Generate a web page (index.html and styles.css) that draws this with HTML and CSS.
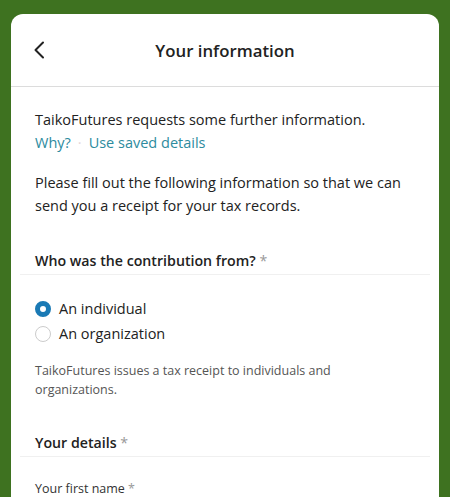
FILE: index.html
```html
<!DOCTYPE html>
<html lang="en">
<head>
  <meta charset="UTF-8" />
  <meta name="viewport" content="width=device-width, initial-scale=1" />
  <title>Your information</title>
  <link rel="stylesheet" href="styles.css">
</head>
<body>

  <div class="sheet">
    <header class="sheet-header">
      <button class="back-btn" aria-label="Back">
        <svg width="12" height="18" viewBox="0 0 12 18" aria-hidden="true">
          <path d="M10 1.5 L2.5 9 L10 16.5" fill="none" stroke="#222" stroke-width="2" stroke-linecap="round" stroke-linejoin="round" />
        </svg>
      </button>
      <h1 class="sheet-title">Your information</h1>
    </header>

    <main class="sheet-body">
      <p class="intro">
        TaikoFutures requests some further information.<br>
        <a href="#" class="link">Why?</a><span class="dot">·</span><a href="#" class="link">Use saved details</a>
      </p>

      <p class="intro">Please fill out the following information so that we can send you a receipt for your tax records.</p>

      <section class="field-section">
        <h2 class="section-title">Who was the contribution from? <span class="req">*</span></h2>

        <div class="radio-group">
          <label class="radio">
            <input type="radio" name="from" value="individual" checked />
            <span class="radio-mark"></span>
            An individual
          </label>
          <label class="radio">
            <input type="radio" name="from" value="organization" />
            <span class="radio-mark"></span>
            An organization
          </label>
        </div>

        <p class="help">TaikoFutures issues a tax receipt to individuals and organizations.</p>
      </section>

      <section class="field-section">
        <h2 class="section-title">Your details <span class="req">*</span></h2>
        <label class="field-label" for="firstName">Your first name <span class="req">*</span></label>
      </section>
    </main>
  </div>

</body>
</html>
```

FILE: styles.css
```css
/* Base */
* {
  box-sizing: border-box;
}
body {
  margin: 0;
  font-family: 'Open Sans', 'Noto Sans', sans-serif;
  background-color: #3e7220;
  color: #222;
  padding: 14px 11px 0;
}

/* Card */
.sheet {
  background-color: #fff;
  border-radius: 12px 12px 0 0;
  min-height: 483px;
}

.sheet-header {
  position: relative;
  height: 73px;
  display: flex;
  align-items: center;
  justify-content: center;
  border-bottom: 1px solid #dcdcdc;
}
.back-btn {
  position: absolute;
  left: 22px;
  top: 27px;
  background: none;
  border: none;
  padding: 0;
  cursor: pointer;
}
.sheet-title {
  margin: 0;
  font-size: 16.8px;
  font-weight: 600;
  color: #222;
}

/* Body */
.sheet-body {
  padding: 22px 24px 0;
}
.intro {
  margin: 0 0 18px;
  font-size: 14.5px;
  line-height: 22.5px;
  color: #222;
}
.link {
  color: #2d8b9e;
  text-decoration: none;
}
.dot {
  color: #e6d6d8;
  margin: 0 7px;
}

/* Form sections */
.field-section {
  margin-top: 34px;
}
.section-title {
  margin: 0 -15px;
  padding: 0 15px 4px;
  font-size: 14.2px;
  font-weight: 600;
  color: #222;
  border-bottom: 1px solid #f0f0f0;
}
.req {
  color: #999;
  font-weight: 400;
}

.radio-group {
  display: flex;
  flex-direction: column;
  gap: 3px;
  margin-top: 23px;
}
.radio {
  display: flex;
  align-items: center;
  gap: 8px;
  font-size: 14.5px;
  line-height: 22px;
  cursor: pointer;
}
.radio input {
  display: none;
}
.radio-mark {
  width: 16px;
  height: 16px;
  border-radius: 50%;
  border: 1px solid #ccc;
  background-color: #fff;
}
.radio input:checked + .radio-mark {
  border: 5px solid #1a7ab5;
}

.help {
  margin: 16px 0 0;
  font-size: 12.5px;
  line-height: 19px;
  color: #555;
}

.field-label {
  display: block;
  margin-top: 23px;
  font-size: 12.5px;
  color: #333;
}
```
